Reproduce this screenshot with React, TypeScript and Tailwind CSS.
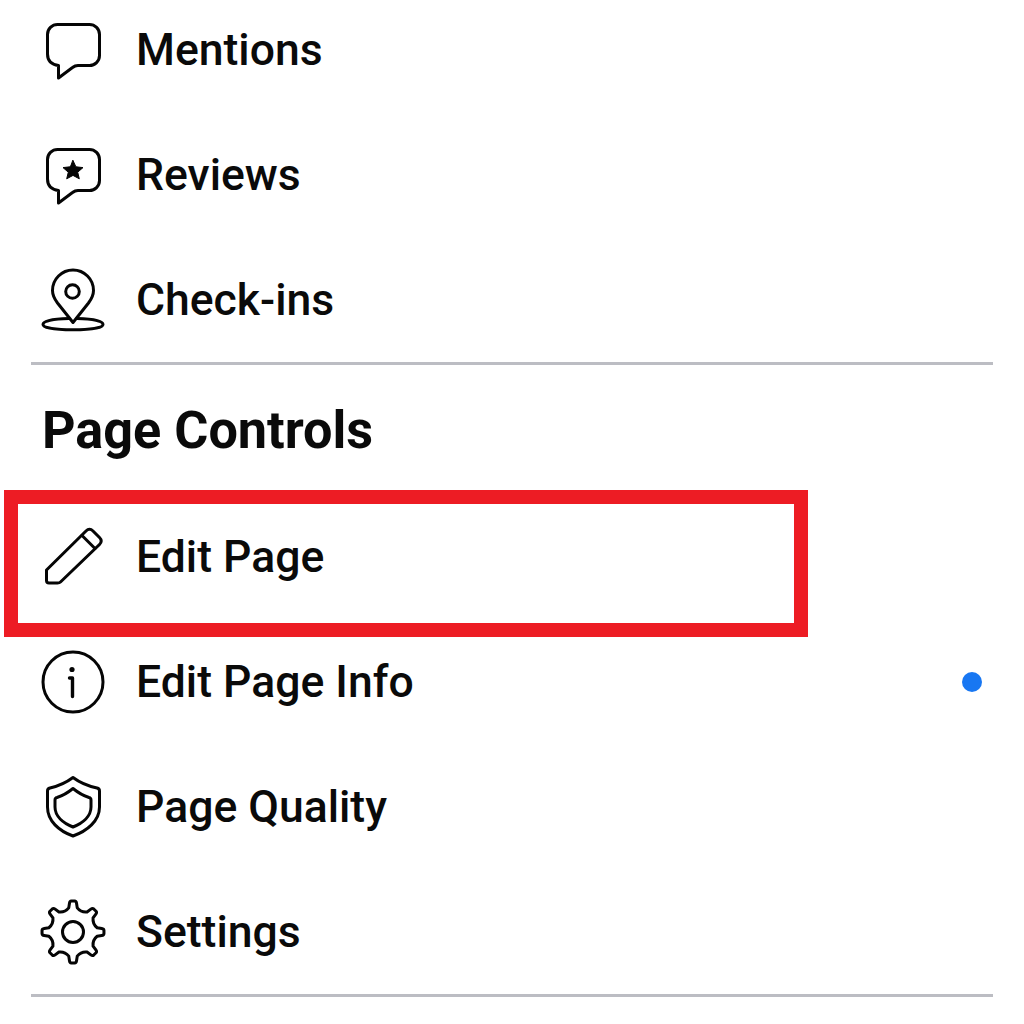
import React from 'react';

const stroke = {
    fill: 'none',
    stroke: '#050505',
    strokeWidth: 3,
    strokeLinejoin: 'round' as const,
    strokeLinecap: 'round' as const,
};

const Icon: React.FC<{ children: React.ReactNode }> = ({ children }) => (
    <svg width="64" height="64" viewBox="0 0 64 64" className="shrink-0 overflow-visible">
        <g {...stroke}>{children}</g>
    </svg>
);

const bubble =
    'M16.5 6.5H48.5a10 10 0 0 1 10 10V37.5a10 10 0 0 1-10 10H37Q34 47.5 31.5 49.5L17.5 60V47.5Q6.5 46 6.5 36V16.5a10 10 0 0 1 10-10Z';

// eight toothed wheel, rounded tips and valleys
const gearPath = () => {
    const at = (deg: number, r: number) => {
        const a = ((deg - 90) * Math.PI) / 180;
        return `${(32 + r * Math.cos(a)).toFixed(2)} ${(32 + r * Math.sin(a)).toFixed(2)}`;
    };
    let d = `M${at(-10, 24.5)}`;
    for (let i = 0; i < 8; i++) {
        const c = i * 45;
        d += `L${at(c - 7, 29)}Q${at(c - 6, 31)} ${at(c - 3, 31)}L${at(c + 3, 31)}Q${at(c + 6, 31)} ${at(c + 7, 29)}L${at(c + 10, 24.5)}`;
        d += `Q${at(c + 22.5, 21)} ${at(c + 35, 24.5)}`;
    }
    return `${d}Z`;
};

const icons: Record<string, React.ReactNode> = {
    mentions: <path d={bubble} />,
    reviews: (
        <>
            <path d={bubble} />
            <path
                d="M32 17.5L34.9 23.8L42 24.6L36.7 29.2L38.3 35.8L32 32.4L25.7 35.8L27.3 29.2L22 24.6L29.1 23.8Z"
                fill="#050505"
                strokeWidth="1"
            />
        </>
    ),
    checkins: (
        <>
            <path d="M32 54.5L16.5 35C13.5 31 11.5 27.5 11.5 22.5A20.5 20.5 0 0 1 52.5 22.5C52.5 27.5 50.5 31 47.5 35Z" />
            <circle cx="31.5" cy="23.5" r="6.8" />
            <path d="M28 50.5C12 50.8 2 53 2 56.5C2 60 15 61.8 32 61.8S62 60 62 56.5C62 53 52 50.8 36 50.5" />
        </>
    ),
    edit: (
        <>
            <path d="M5.5 45L45 6Q48.5 2.5 52 6L58.5 12.5Q62 16 58.5 19.5L19.5 57Q18.5 58 16.5 58H8Q5.5 58 5.5 55.5Z" />
            <path d="M41 10.500L54 23.500" />
        </>
    ),
    info: (
        <>
            <circle cx="32" cy="32" r="30" />
            <circle cx="31" cy="19.5" r="2.6" fill="#050505" stroke="none" />
            <path d="M28.5 28H31.5V46.5" strokeWidth="3.4" />
        </>
    ),
    quality: (
        <>
            <path d="M32 2.5Q42 10 56 13Q58.500 13.600 58.500 16V32C58.500 46 46 56 32 61C18 56 6.500 46 6.500 32V16Q6.500 13.600 9 13Q22 10 32 2.500Z" />
            <path d="M32 13.500Q40 20 48 22.500Q50 23 50 25V32C50 41 42 48 32 52C22 48 14 41 14 32V25Q14 23 16 22.500Q24 20 32 13.500Z" />
        </>
    ),
    settings: (
        <>
            <path d={gearPath()} />
            <circle cx="32" cy="32" r="10.5" />
        </>
    ),
};

const Row: React.FC<{ icon: string; label: string; dot?: boolean; boxed?: boolean }> = ({ icon, label, dot, boxed }) => (
    <div className="relative flex h-[125px] items-center pl-[41px] pr-[42px]">
        <Icon>{icons[icon]}</Icon>
        <span className="ml-[31px] mt-[2px] text-[44.5px] font-medium leading-none text-[#0a0a0a]">{label}</span>
        {dot && <span className="ml-auto h-5 w-5 rounded-full bg-[#1877f2]" />}
        {boxed && <div className="absolute -top-1 -bottom-[18px] left-1 w-[804px] border-[14px] border-[#ed1c24]" />}
    </div>
);

const Divider = () => <div className="mx-[31px] h-[3px] bg-[#bcbdc3]" />;

const App: React.FC = () => {
    return (
        <div className="h-[1024px] w-[1024px] overflow-hidden bg-white font-['Roboto',sans-serif]">
            <div className="-mt-[13px]">
                <Row icon="mentions" label="Mentions" />
                <Row icon="reviews" label="Reviews" />
                <Row icon="checkins" label="Check-ins" />
                <Divider />
                <h2 className="flex h-[129px] items-center pl-[42px] pt-[3px] text-[52.2px] font-bold leading-none text-[#0a0a0a]">
                    Page Controls
                </h2>
                <Row icon="edit" label="Edit Page" boxed />
                <Row icon="info" label="Edit Page Info" dot />
                <Row icon="quality" label="Page Quality" />
                <Row icon="settings" label="Settings" />
                <Divider />
            </div>
        </div>
    );
};

export default App;
